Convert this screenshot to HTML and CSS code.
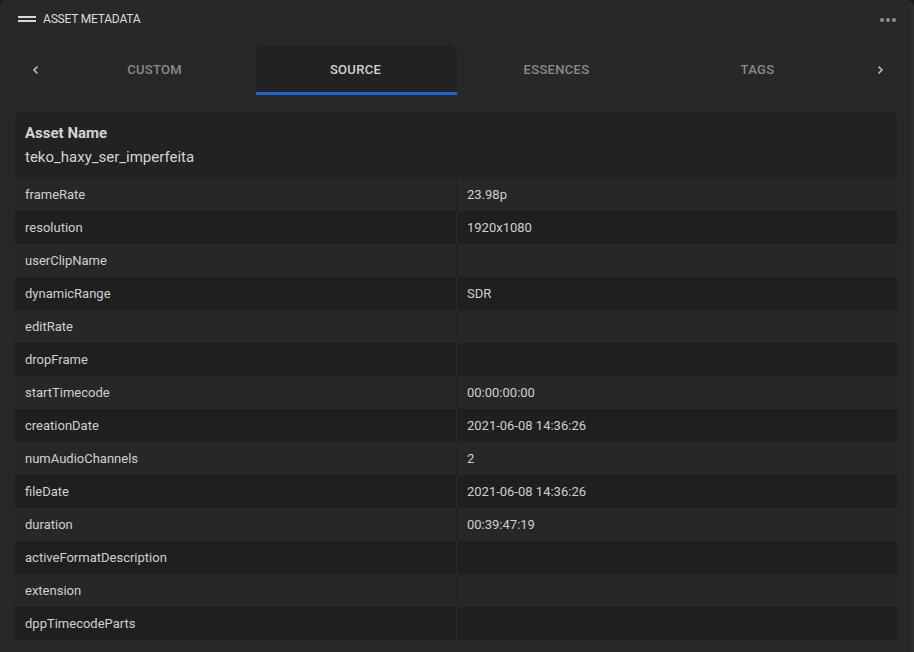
FILE: index.html
```html
<!DOCTYPE html>
<html>
<head>
<meta charset="utf-8">
<link rel="stylesheet" href="styles.css">
</head>
<body>
<div class="panel">
  <header class="header">
    <div class="title">
      <span class="burger"><i></i><i></i></span>
      <span>ASSET METADATA</span>
    </div>
    <span class="dots"><i></i><i></i><i></i></span>
  </header>
  <nav class="tabs">
    <span class="arrow">
      <svg width="10" height="10" viewBox="0 0 10 10"><path d="M6.5 1.5 L3 5 L6.5 8.5" fill="none" stroke="#bdbdbd" stroke-width="1.6"/></svg>
    </span>
    <div class="tab">CUSTOM</div>
    <div class="tab active">SOURCE</div>
    <div class="tab">ESSENCES</div>
    <div class="tab">TAGS</div>
    <span class="arrow">
      <svg width="10" height="10" viewBox="0 0 10 10"><path d="M3.5 1.5 L7 5 L3.5 8.5" fill="none" stroke="#bdbdbd" stroke-width="1.6"/></svg>
    </span>
  </nav>
  <section class="table">
    <div class="asset">
      <div class="asset-label">Asset Name</div>
      <div class="asset-value">teko_haxy_ser_imperfeita</div>
    </div>
    <div class="row"><div class="k">frameRate</div><div class="v">23.98p</div></div>
    <div class="row"><div class="k">resolution</div><div class="v">1920x1080</div></div>
    <div class="row"><div class="k">userClipName</div><div class="v"></div></div>
    <div class="row"><div class="k">dynamicRange</div><div class="v">SDR</div></div>
    <div class="row"><div class="k">editRate</div><div class="v"></div></div>
    <div class="row"><div class="k">dropFrame</div><div class="v"></div></div>
    <div class="row"><div class="k">startTimecode</div><div class="v">00:00:00:00</div></div>
    <div class="row"><div class="k">creationDate</div><div class="v">2021-06-08 14:36:26</div></div>
    <div class="row"><div class="k">numAudioChannels</div><div class="v">2</div></div>
    <div class="row"><div class="k">fileDate</div><div class="v">2021-06-08 14:36:26</div></div>
    <div class="row"><div class="k">duration</div><div class="v">00:39:47:19</div></div>
    <div class="row"><div class="k">activeFormatDescription</div><div class="v"></div></div>
    <div class="row"><div class="k">extension</div><div class="v"></div></div>
    <div class="row"><div class="k">dppTimecodeParts</div><div class="v"></div></div>
  </section>
</div>
</body>
</html>
```
FILE: styles.css
```css
* { box-sizing: border-box; }
html, body {
  margin: 0;
  padding: 0;
  background: #1c1c1c;
  font-family: Roboto, "Liberation Sans", sans-serif;
}
.panel {
  width: 914px;
  height: 652px;
  background: #282828;
  border-radius: 8px 8px 0 0;
  overflow: hidden;
  border-right: 3px solid #2e2e2e;
}
.header {
  height: 39px;
  display: flex;
  align-items: center;
  justify-content: space-between;
  padding: 0 15px 1px 18px;
}
.title {
  display: flex;
  align-items: center;
  gap: 7px;
  color: #dcdcdc;
  font-size: 12px;
  letter-spacing: -0.2px;
}
.burger {
  display: flex;
  flex-direction: column;
  gap: 2px;
  width: 18px;
}
.burger i {
  display: block;
  height: 2px;
  background: #d8d8d8;
}
.dots {
  display: flex;
  gap: 1.5px;
  margin-top: 2px;
}
.dots i {
  display: block;
  width: 4.5px;
  height: 4.5px;
  border-radius: 50%;
  background: #8c8c8c;
}
.tabs {
  display: flex;
  align-items: stretch;
  height: 49px;
  margin-top: 7px;
  padding-left: 15px;
}
.arrow {
  width: 40px;
  display: flex;
  align-items: center;
  justify-content: center;
  padding: 0 0 2px 2px;
}
.tab {
  width: 201px;
  display: flex;
  align-items: center;
  justify-content: center;
  font-size: 13px;
  font-weight: 500;
  color: #8a8a8a;
  letter-spacing: 0.3px;
  padding: 0 2px 0 0;
  border-bottom: 3px solid transparent;
}
.tab.active {
  background: #222222;
  color: #d2d2d2;
  border-radius: 6px 6px 0 0;
  border-bottom-color: #1b66dc;
}
.table {
  margin: 17px 14px 0 15px;
}
.asset {
  background: #222222;
  border-radius: 6px 6px 0 0;
  height: 66px;
  padding: 13px 10px 0;
}
.asset-label {
  font-size: 15px;
  font-weight: 700;
  color: #d4d4d4;
  line-height: 16px;
}
.asset-value {
  font-size: 15px;
  color: #d4d4d4;
  margin-top: 8px;
  line-height: 16px;
}
.row {
  display: grid;
  grid-template-columns: 441px 1fr;
  height: 33px;
  align-items: stretch;
  background: #272727;
  font-size: 13px;
  color: #d0d0d0;
}
.row:nth-child(odd) {
  background: #1f1f1f;
}
.k, .v {
  display: flex;
  align-items: center;
  padding-left: 10px;
}
.v {
  border-left: 1px solid #2c2c2c;
  color: #cfcfcf;
}
.row:nth-child(even) .v {
  border-left-color: #1f1f1f;
}
```
